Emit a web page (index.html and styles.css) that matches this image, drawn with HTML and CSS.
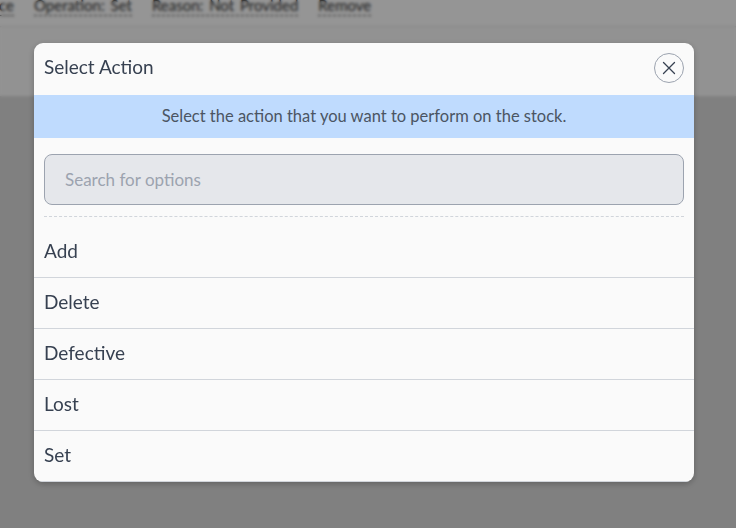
FILE: index.html
```html
<!DOCTYPE html>
<html lang="en">
<head>
<meta charset="utf-8">
<title>Select Action</title>
<link rel="stylesheet" href="styles.css">
</head>
<body>
<div class="page">
  <div class="topbar">
    <span class="chip">ce</span>
    <span class="chip">Operation: Set</span>
    <span class="chip">Reason: Not Provided</span>
    <span class="chip">Remove</span>
  </div>
  <div class="toolbar"></div>
  <div class="content"></div>
</div>

<div class="overlay">
  <div class="modal">
    <div class="modal-header">
      <h2 class="modal-title">Select Action</h2>
      <button class="close-btn" aria-label="Close">
        <svg width="14" height="14" viewBox="0 0 14 14"><path d="M1.5 1.5 L12.5 12.5 M12.5 1.5 L1.5 12.5" stroke="#374151" stroke-width="1.3" stroke-linecap="round" fill="none"/></svg>
      </button>
    </div>
    <div class="modal-info">Select the action that you want to perform on the stock.</div>
    <div class="modal-body">
      <input class="search" type="text" placeholder="Search for options">
      <div class="divider"></div>
    </div>
    <ul class="options">
      <li class="option">Add</li>
      <li class="option">Delete</li>
      <li class="option">Defective</li>
      <li class="option">Lost</li>
      <li class="option">Set</li>
    </ul>
  </div>
</div>
</body>
</html>
```

FILE: styles.css
```css
* { box-sizing: border-box; }
html, body { margin: 0; padding: 0; }
body {
  font-family: "Lato", "Noto Sans", sans-serif;
  background: #d4d4d4;
  width: 736px;
  height: 528px;
  overflow: hidden;
}
.page { height: 528px; display: flex; flex-direction: column; }
.topbar {
  height: 27px;
  background: #f8f8f8;
  border-bottom: 1px solid #e0e0e0;
  display: flex;
  gap: 20px;
  margin-left: -1px;
  align-items: flex-start;
}
.chip {
  font-size: 15px;
  color: #333;
  line-height: 15px;
  margin-top: -2px;
  padding-bottom: 2px;
  border-bottom: 1px dashed #555;
  word-spacing: 2px;
}
.toolbar { height: 69px; background: #f4f4f4; }
.content { flex: 1; background: #d6d6d6; }

.overlay {
  position: fixed;
  inset: 0;
  background: rgba(0, 0, 0, 0.4);
  backdrop-filter: blur(1.5px);
  display: flex;
  align-items: flex-start;
  padding: 43px 0 0 34px;
}
.modal {
  width: 660px;
  background: #fafafa;
  border-radius: 9px;
  overflow: hidden;
  display: flex;
  flex-direction: column;
  box-shadow: 0 2px 6px rgba(0,0,0,0.25);
}
.modal-header {
  height: 52px;
  display: flex;
  align-items: center;
  justify-content: space-between;
  padding: 0 10px 2px;
}
.modal-title {
  margin: 0 0 3px;
  font-size: 19px;
  font-weight: 400;
  color: #374151;
}
.close-btn {
  width: 30px;
  height: 30px;
  border-radius: 50%;
  border: 1px solid #9ca3af;
  background: transparent;
  display: flex;
  align-items: center;
  justify-content: center;
  padding: 0;
}
.modal-info {
  height: 43px;
  background: #bfdbfe;
  display: flex;
  align-items: center;
  justify-content: center;
  font-size: 16.5px;
  color: #4b5563;
  padding-bottom: 2px;
}
.modal-body { padding: 16px 10px 0; }
.search {
  display: block;
  width: 100%;
  height: 51px;
  border: 1px solid #9ca3af;
  border-radius: 8px;
  background: #e5e7eb;
  padding: 0 20px;
  font-family: inherit;
  font-size: 17px;
  color: #374151;
  outline: none;
}
.search::placeholder { color: #9ca3af; }
.divider {
  margin-top: 11px;
  border-top: 1px dashed #d1d5db;
}
.options {
  list-style: none;
  margin: 0;
  padding: 10px 0 0;
}
.option {
  height: 51px;
  display: flex;
  align-items: center;
  padding: 0 10px 3px;
  font-size: 19px;
  color: #374151;
  border-bottom: 1px solid #d1d5db;
}
```
